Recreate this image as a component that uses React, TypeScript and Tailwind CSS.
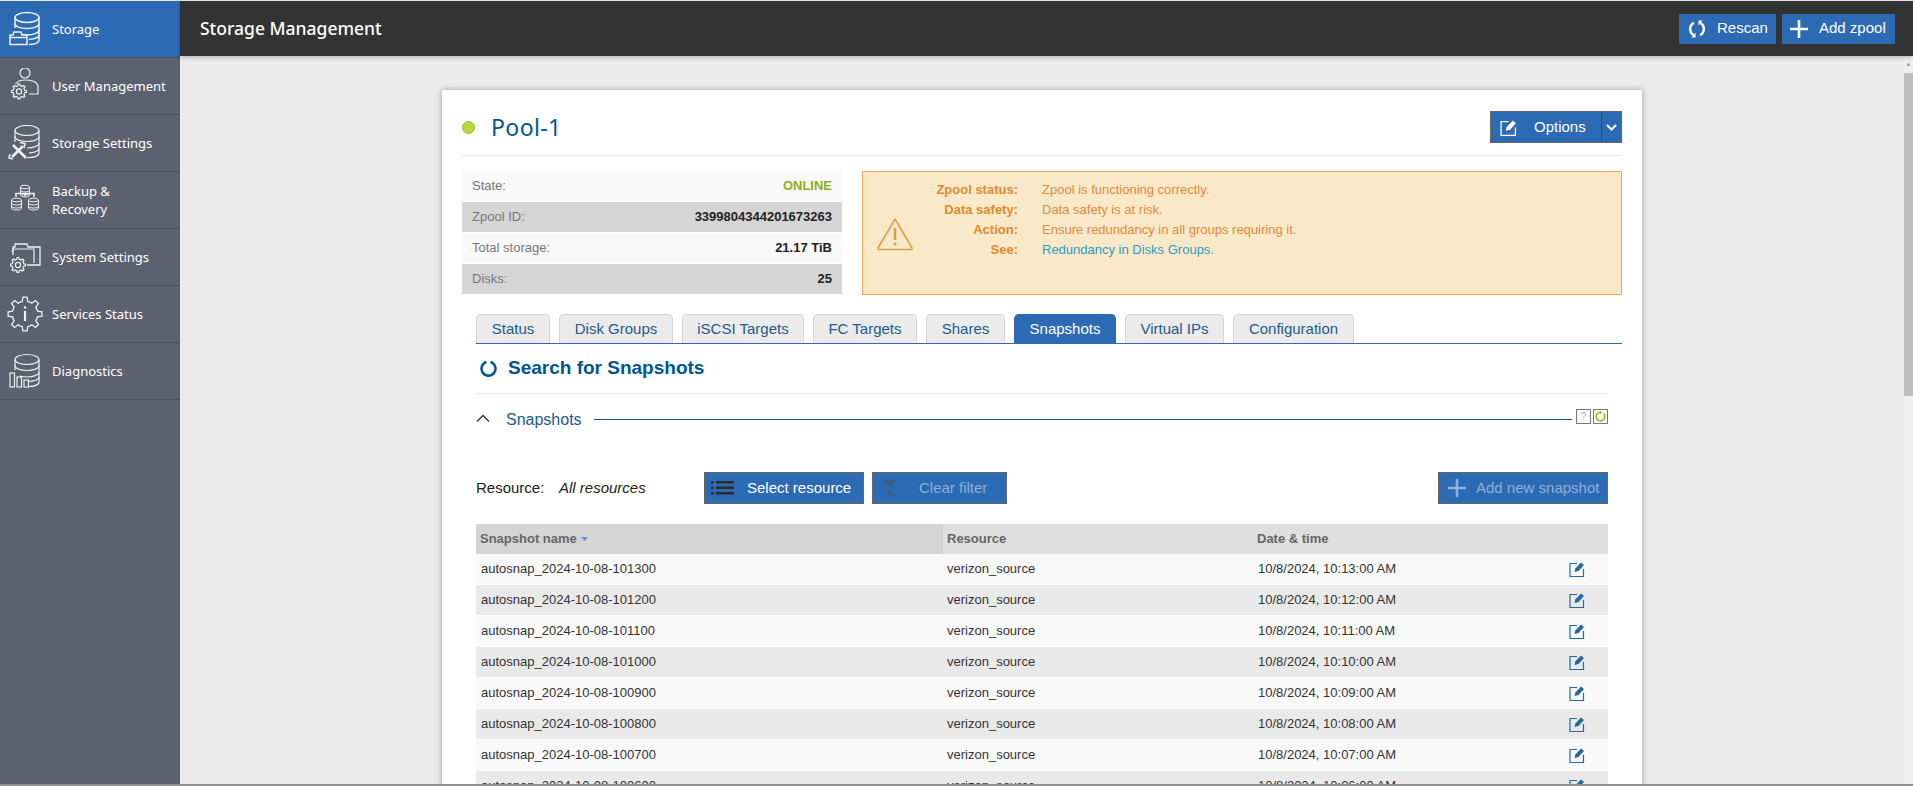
import React from 'react';

const sans = "font-['Noto_Sans',sans-serif]";

const gearPath = (cx: number, cy: number, outer: number, inner: number, teeth: number) => {
  const pts: string[] = [];
  const step = (Math.PI * 2) / teeth;
  for (let i = 0; i < teeth; i++) {
    const a = i * step - Math.PI / 2;
    const at = (r: number, d: number) => `${(cx + r * Math.cos(a + d * step)).toFixed(2)} ${(cy + r * Math.sin(a + d * step)).toFixed(2)}`;
    pts.push(at(inner, -0.5), at(inner, -0.28), at(outer, -0.16), at(outer, 0.16), at(inner, 0.28));
  }
  return `M${pts.join('L')}Z`;
};

const Svg = ({ children }: { children: React.ReactNode }) => (
  <svg width="36" height="36" viewBox="0 0 36 36" fill="none" stroke="#fff" strokeWidth="1.200" className="shrink-0 opacity-90">
    {children}
  </svg>
);

const Db = () => (
  <>
    <ellipse cx="20" cy="6.500" rx="12" ry="5" />
    <path d="M8 6.500V17M32 6.500V29c0 3-5 4.500-10 4.500" />
    <path d="M8 12.500c0 3 5 5 12 5s12-2 12-5" />
    <path d="M13 23c2 .7 4.500 1 7 1 6 0 12-2 12-5" />
    <path d="M22 28.500c5-.5 10-2 10-4.500" />
  </>
);

const StorageIcon = () => (
  <Svg>
    <g strokeWidth="1.500">
      <Db />
      <path d="M3 33.500V24h3l1-3h7l1 3h5v9.500z" fill="#2c6ab4" />
      <path d="M3 26.500h17" />
    </g>
  </Svg>
);

const UserIcon = () => (
  <Svg>
    <circle cx="18" cy="5" r="5" />
    <path d="M8.500 16c2-3 5-4 9.500-4s13 1 13 7v7h-9" />
    <path d={gearPath(12, 23.500, 7.500, 5.800, 8)} />
    <circle cx="12" cy="23.500" r="2.600" />
  </Svg>
);

const StorageSettingsIcon = () => (
  <Svg>
    <ellipse cx="20" cy="5.500" rx="12" ry="5" />
    <path d="M8 5.500V17M32 5.500V28c0 3-5 4.500-10 4.500h-2" />
    <path d="M8 11.500c0 3 5 5 12 5s12-2 12-5" />
    <path d="M20 23c6 0 12-2 12-5M22 28c5-.5 10-2 10-4.500" />
    <path d="M5 32l11-11" strokeWidth="2.600" />
    <path d="M6 20l13 13" strokeWidth="2.600" />
    <path d="M13 17.500l5 1-1 4.500M3 29l-1 4 4 1" strokeWidth="1.500" />
  </Svg>
);

const Mini = ({ x, y, rx = 4.500 }: { x: number; y: number; rx?: number }) => (
  <>
    <ellipse cx={x} cy={y} rx={rx} ry="1.800" />
    <path d={`M${x - rx} ${y}v8c0 1 2 2 ${rx} 2s${rx}-1 ${rx}-2v-8`} />
    <path d={`M${x - rx} ${y + 3}c0 1 2 2 ${rx} 2s${rx}-1 ${rx}-2M${x - rx} ${y + 6}c0 1 2 2 ${rx} 2s${rx}-1 ${rx}-2`} />
  </>
);

const BackupIcon = () => (
  <Svg>
    <g strokeWidth="1">
      <Mini x={18} y={5} />
      <Mini x={9.500} y={18} rx={5} />
      <Mini x={26.500} y={18} rx={5} />
      <path d="M9 15v-3.500h18V15" strokeWidth="1.600" />
      <path d="M18 11v3" strokeWidth="1.600" />
    </g>
  </Svg>
);

const SystemIcon = () => (
  <Svg>
    <path d="M6 16V8h2V5h12l1 3h12v18H20" strokeWidth="1.300" />
    <path d="M5 13l1-3h21v14" />
    <path d={gearPath(11, 26, 7.500, 5.800, 8)} />
    <circle cx="11" cy="26" r="2.600" />
  </Svg>
);

const ServicesIcon = () => (
  <Svg>
    <path d={gearPath(18, 18, 17, 12.800, 8)} strokeWidth="1.300" />
    <circle cx="18" cy="11.500" r="1.300" fill="#fff" stroke="none" />
    <path d="M18 15v10" strokeWidth="2.200" />
  </Svg>
);

const DiagnosticsIcon = () => (
  <Svg>
    <Db />
    <rect x="3" y="20" width="4.500" height="14" fill="#5c6170" />
    <rect x="10" y="24" width="4.500" height="10" fill="#5c6170" />
    <rect x="17" y="27" width="4.500" height="7" fill="#5c6170" />
  </Svg>
);

const EditIcon = ({ color, size = 16 }: { color: string; size?: number }) => (
  <svg width={size} height={size} viewBox="0 0 16 16" fill="none" className="shrink-0">
    <path d="M8 2.500H1v13h13.500V8" stroke={color} strokeWidth="1.200" />
    <path d="M5.500 11l.8-3.500L12 1.500l3 2.500-5.500 6z" fill={color} />
  </svg>
);

const RescanIcon = () => (
  <svg width="18" height="18" viewBox="0 0 18 18" fill="none" stroke="#fff" strokeWidth="2.400" className="shrink-0">
    <path d="M6 2.800A7 7 0 0 0 5.500 15" />
    <path d="M12 15.200A7 7 0 0 0 12.500 3" />
    <path d="M7.500 12.500v5h-4z" fill="#fff" stroke="none" />
    <path d="M10.500 5.500v-5h4z" fill="#fff" stroke="none" />
  </svg>
);

const Plus = ({ color = '#fff', size = 18 }: { color?: string; size?: number }) => (
  <svg width={size} height={size} viewBox="0 0 18 18" stroke={color} strokeWidth="2.600" className="shrink-0">
    <path d="M9 0v18M0 9h18" />
  </svg>
);

const navItems = [
  { label: 'Storage', icon: <StorageIcon />, active: true },
  { label: 'User Management', icon: <UserIcon /> },
  { label: 'Storage Settings', icon: <StorageSettingsIcon /> },
  { label: 'Backup &\nRecovery', icon: <BackupIcon /> },
  { label: 'System Settings', icon: <SystemIcon /> },
  { label: 'Services Status', icon: <ServicesIcon /> },
  { label: 'Diagnostics', icon: <DiagnosticsIcon /> },
];

const infoRows = [
  { label: 'State:', value: 'ONLINE', online: true },
  { label: 'Zpool ID:', value: '3399804344201673263' },
  { label: 'Total storage:', value: '21.17 TiB' },
  { label: 'Disks:', value: '25' },
];

const tabs = [
  { label: 'Status', w: 'w-[74px]' },
  { label: 'Disk Groups', w: 'w-[114px]' },
  { label: 'iSCSI Targets', w: 'w-[122px]' },
  { label: 'FC Targets', w: 'w-[104px]' },
  { label: 'Shares', w: 'w-[79px]' },
  { label: 'Snapshots', w: 'w-[102px]', active: true },
  { label: 'Virtual IPs', w: 'w-[99px]' },
  { label: 'Configuration', w: 'w-[121px]' },
];

const statusRows = [
  { label: 'Zpool status:', value: 'Zpool is functioning correctly.' },
  { label: 'Data safety:', value: 'Data safety is at risk.' },
  { label: 'Action:', value: 'Ensure redundancy in all groups requiring it.' },
];

const snapshots = [
  ['101300', '10:13:00'],
  ['101200', '10:12:00'],
  ['101100', '10:11:00'],
  ['101000', '10:10:00'],
  ['100900', '10:09:00'],
  ['100800', '10:08:00'],
  ['100700', '10:07:00'],
  ['100600', '10:06:00'],
];

export default function App() {
  return (
    <div className="h-screen flex flex-col overflow-hidden bg-[#ebebeb] font-['Liberation_Sans',Arial,sans-serif] text-[13px] text-[#333] pt-px">
      <div className="flex-1 flex min-h-0">
        <aside className="w-[180px] shrink-0 bg-[#5c6170] text-white">
          {navItems.map((item) => (
            <div
              key={item.label}
              className={`h-[57px] flex items-center pl-[7px] gap-[9px] border-b border-[#4b4f5b] ${sans} text-[13px] leading-[18px] ${
                item.active ? 'bg-[#2c6ab4]' : ''
              }`}
            >
              {item.icon}
              <span className="w-[122px] whitespace-pre-line">{item.label}</span>
            </div>
          ))}
        </aside>

        <div className="flex-1 min-w-0 flex flex-col">
          <header className="h-[55px] shrink-0 bg-[#333] flex items-center justify-between pl-[20px] pr-[18px] shadow-[0_2px_4px_rgba(0,0,0,0.2)] z-10">
            <h1 className={`${sans} text-[17.5px] font-medium text-white`}>Storage Management</h1>
            <div className="flex gap-[6px] text-[15px] text-white">
              <button className="h-[30px] w-[97px] bg-[#2c6ab4] flex items-center pl-[9px] gap-[11px]">
                <RescanIcon />
                Rescan
              </button>
              <button className="h-[30px] w-[113px] bg-[#2c6ab4] flex items-center pl-[8px] gap-[11px]">
                <Plus />
                Add zpool
              </button>
            </div>
          </header>

          <div className="flex-1 min-h-0 flex overflow-hidden">
            <main className="flex-1 min-w-0 pl-[262px] pt-[34px] overflow-hidden">
              <div className="w-[1200px] min-h-[800px] bg-white shadow-[0_0_6px_rgba(0,0,0,0.35)] px-[20px] pt-[20px]">
                <div className="h-[46px] flex items-start justify-between border-b border-[#e9e9e9]">
                  <div className="flex items-center gap-[16px] h-[34px]">
                    <span className="w-[13px] h-[13px] rounded-full bg-[#b7d83f] border border-[#9cbc38]" />
                    <span className={`${sans} text-[23px] tracking-[0.4px] text-[#00568f]`}>Pool-1</span>
                  </div>
                  <div className="h-[32px] w-[132px] mt-px flex bg-[#2c6ab4] border border-[#666] text-[15px] text-white">
                    <div className="flex-1 flex items-center pl-[9px] gap-[17px] border-r border-[#1f4f8a]">
                      <EditIcon color="#fff" size={17} />
                      Options
                    </div>
                    <div className="w-[19px] flex items-center justify-center">
                      <svg width="11" height="7" viewBox="0 0 11 7" fill="none" stroke="#fff" strokeWidth="2">
                        <path d="M1 1l4.500 4.500L10 1" />
                      </svg>
                    </div>
                  </div>
                </div>

                <div className="flex gap-[20px] mt-[15px]">
                  <div className="w-[380px] flex flex-col gap-px">
                    {infoRows.map((row, i) => (
                      <div
                        key={row.label}
                        className={`h-[30px] flex items-center justify-between px-[10px] ${i % 2 ? 'bg-[#d5d5d5]' : 'bg-[#f9f9f9]'}`}
                      >
                        <span className="text-[#777]">{row.label}</span>
                        <span className={row.online ? 'font-bold text-[#8fae1b]' : 'font-bold text-[#222]'}>{row.value}</span>
                      </div>
                    ))}
                  </div>

                  <div className="w-[760px] h-[124px] bg-[#fae9c8] border border-[#eea858] flex pt-[8px]">
                    <svg width="38" height="34" viewBox="0 0 38 34" fill="none" stroke="#e29a43" strokeWidth="1.500" className="ml-[13px] mt-[37px] shrink-0">
                      <path d="M19 2L2 31c-.5 1 0 1.500 1 1.500h32c1 0 1.500-.5 1-1.500z" strokeLinejoin="round" />
                      <path d="M19 11v12" strokeWidth="2.500" />
                      <circle cx="19" cy="27" r="1.500" fill="#e29a43" stroke="none" />
                    </svg>
                    <div className="ml-[14px] flex flex-col">
                      {statusRows.map((row) => (
                        <div key={row.label} className="h-[20px] flex items-center">
                          <span className="w-[90px] mr-[24px] text-right font-bold text-[#e08a2e]">{row.label}</span>
                          <span className="text-[#e08a40]">{row.value}</span>
                        </div>
                      ))}
                      <div className="h-[20px] flex items-center">
                        <span className="w-[90px] mr-[24px] text-right font-bold text-[#e08a2e]">See:</span>
                        <span className="text-[#2a9bc7]">Redundancy in Disks Groups.</span>
                      </div>
                    </div>
                  </div>
                </div>

                <div className="ml-[14px] w-[1146px] mt-[19px] h-[30px] flex gap-[9px] border-b border-[#2c6ab4] text-[15px]">
                  {tabs.map((tab) => (
                    <div
                      key={tab.label}
                      className={`${tab.w} h-[29px] flex items-center justify-center rounded-t-[5px] border border-b-0 ${
                        tab.active ? 'bg-[#2c6ab4] border-[#2c6ab4] text-white' : 'bg-[#ebebeb] border-[#d5d5d5] text-[#1f5a8a]'
                      }`}
                    >
                      {tab.label}
                    </div>
                  ))}
                </div>

                <div className="ml-[14px] w-[1132px]">
                  <div className="h-[50px] flex items-center pl-[4px] gap-[11px] border-b border-[#e9e9e9]">
                    <svg width="17" height="17" viewBox="0 0 17 17" fill="none" stroke="#00568f" strokeWidth="2.500">
                      <path d="M6.500 2a7 7 0 1 0 4 0" />
                    </svg>
                    <h2 className="text-[19px] font-bold text-[#00568f]">Search for Snapshots</h2>
                  </div>

                  <div className="h-[51px] flex items-center">
                    <svg width="14" height="8" viewBox="0 0 14 8" fill="none" stroke="#333" strokeWidth="1.300" className="mb-[4px]">
                      <path d="M1 7.500l6-6 6 6" />
                    </svg>
                    <span className="ml-[16px] text-[16px] text-[#1f5a8a]">Snapshots</span>
                    <div className="flex-1 h-px bg-[#00568f] ml-[12px] mr-[4px]" />
                    <div className="w-[15px] h-[15px] mb-[6px] border border-[#777] flex items-center justify-center text-[10px] text-[#7fb6d6]">?</div>
                    <div className="ml-[2px] w-[15px] h-[15px] mb-[6px] border border-[#777] flex items-center justify-center">
                      <svg width="11" height="11" viewBox="0 0 11 11" fill="none" stroke="#9ab61f" strokeWidth="1.600">
                        <path d="M8.500 2.500a4.300 4.300 0 1 1-3-1.200" />
                        <path d="M5 0v3l2.500-1.500z" fill="#9ab61f" stroke="none" />
                      </svg>
                    </div>
                  </div>

                  <div className="mt-[27px] flex items-center h-[32px]">
                    <span className="w-[83px] text-[15px] text-[#222]">Resource:</span>
                    <span className="w-[145px] text-[15px] italic text-[#222]">All resources</span>
                    <button className="w-[160px] h-[32px] bg-[#2c6ab4] border border-[#666] flex items-center pl-[6px] gap-[13px] text-[15px] text-white">
                      <svg width="23" height="14" viewBox="0 0 23 14" fill="#2b2b2b" className="shrink-0">
                        <path d="M0 0h2.500v2.500H0zM0 5.500h2.500V8H0zM0 11h2.500v2.500H0zM5 0h18v2.500H5zM5 5.500h18V8H5zM5 11h18v2.500H5z" />
                      </svg>
                      Select resource
                    </button>
                    <button className="ml-[8px] w-[135px] h-[32px] bg-[#2c6ab4] border border-[#666] flex items-center pl-[9px] gap-[20px] text-[15px] text-[#8fb0d8]">
                      <svg width="17" height="16" viewBox="0 0 17 16" fill="#3d5d85" className="shrink-0">
                        <path d="M0 0h15l-5 6v2L6 5zM3 6l11 10h-1.500L10 14l-2 2H6v-6z" />
                      </svg>
                      Clear filter
                    </button>
                    <button className="ml-auto w-[170px] h-[32px] bg-[#2c6ab4] border border-[#666] flex items-center pl-[9px] gap-[10px] text-[15px] text-[#8fb0d8]">
                      <Plus color="#8fb0d8" />
                      Add new snapshot
                    </button>
                  </div>

                  <div className="mt-[20px]">
                    <div className="h-[30px] flex font-bold text-[#666] bg-[#dfdfdf]">
                      <div className="w-[467px] bg-[#d5d5d5] flex items-center pl-[4px] gap-[4px]">
                        Snapshot name
                        <svg width="7" height="4" viewBox="0 0 7 4" fill="#5f93cf"><path d="M0 0h7L3.500 4z" /></svg>
                      </div>
                      <div className="w-[314px] flex items-center pl-[4px]">Resource</div>
                      <div className="flex items-center">Date &amp; time</div>
                    </div>
                    {snapshots.map(([id, time], i) => (
                      <div key={id} className={`h-[30px] mb-px flex items-center ${i % 2 ? 'bg-[#e9e9e9]' : 'bg-[#f9f9f9]'}`}>
                        <div className="w-[467px] pl-[5px]">autosnap_2024-10-08-{id}</div>
                        <div className="w-[315px] pl-[4px]">verizon_source</div>
                        <div className="w-[311px]">10/8/2024, {time} AM</div>
                        <EditIcon color="#1f6aa5" />
                      </div>
                    ))}
                  </div>
                </div>
              </div>
            </main>

            <div className="w-[9px] shrink-0 flex flex-col bg-[#f0f0f0]">
              <div className="h-[17px] flex items-center justify-center text-[6px] text-[#999]">▲</div>
              <div className="h-[323px] bg-[#bdbdbd]" />
            </div>
          </div>
        </div>
      </div>
      <div className="h-[2px] shrink-0 bg-[#8f8f8f]" />
    </div>
  );
}
